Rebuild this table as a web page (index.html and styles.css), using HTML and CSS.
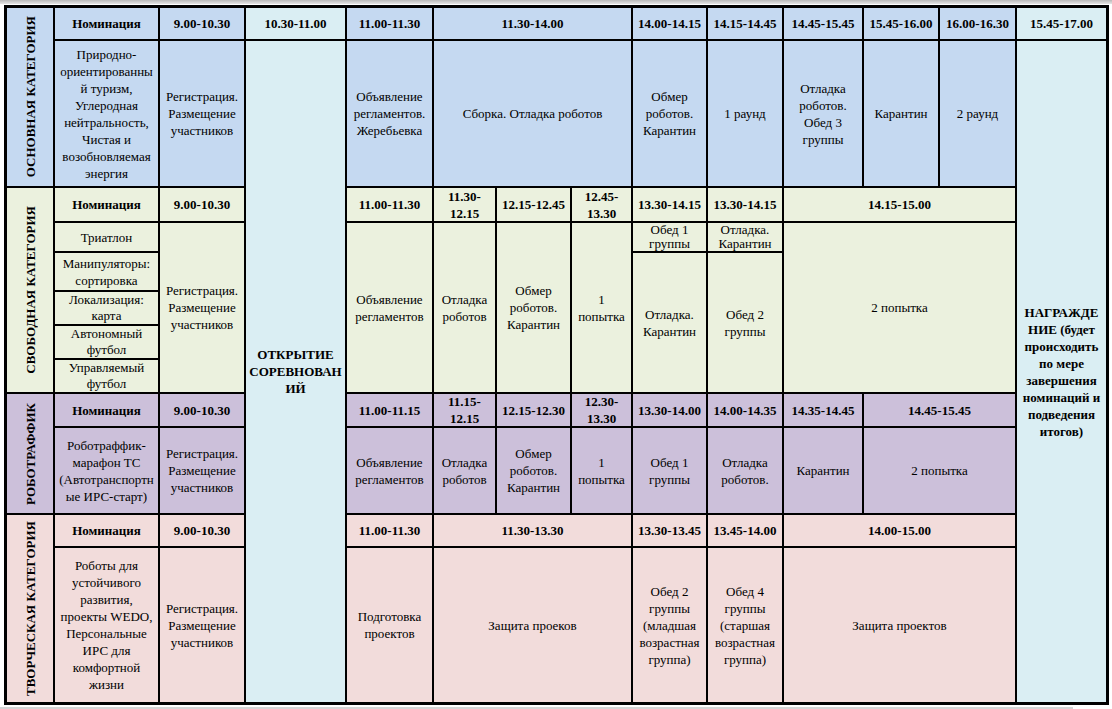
FILE: index.html
```html
<!DOCTYPE html>
<html lang="ru">
<head>
<meta charset="utf-8">
<title>Расписание</title>
<link rel="stylesheet" href="styles.css">
</head>
<body>
<div class="topbar"></div>
<div class="sheet">
  <!-- r0 -->
  <div class="cell cat blue rs2"><span>ОСНОВНАЯ КАТЕГОРИЯ</span></div>
  <div class="cell b blue">Номинация</div>
  <div class="cell b blue">9.00-10.30</div>
  <div class="cell b lblue">10.30-11.00</div>
  <div class="cell b blue">11.00-11.30</div>
  <div class="cell b blue cs3">11.30-14.00</div>
  <div class="cell b blue">14.00-14.15</div>
  <div class="cell b blue">14.15-14.45</div>
  <div class="cell b blue">14.45-15.45</div>
  <div class="cell b blue">15.45-16.00</div>
  <div class="cell b blue">16.00-16.30</div>
  <div class="cell b lblue">15.45-17.00</div>
  <!-- r1 -->
  <div class="cell blue">Природно-<br>ориентированны<br>й туризм,<br>Углеродная<br>нейтральность,<br>Чистая и<br>возобновляемая<br>энергия</div>
  <div class="cell blue">Регистрация.<br>Размещение<br>участников</div>
  <div class="cell b lblue rs11">ОТКРЫТИЕ<br>СОРЕВНОВАН<br>ИЙ</div>
  <div class="cell blue">Объявление<br>регламентов.<br>Жеребьевка</div>
  <div class="cell blue cs3">Сборка. Отладка роботов</div>
  <div class="cell blue">Обмер<br>роботов.<br>Карантин</div>
  <div class="cell blue">1 раунд</div>
  <div class="cell blue">Отладка<br>роботов.<br>Обед 3<br>группы</div>
  <div class="cell blue">Карантин</div>
  <div class="cell blue">2 раунд</div>
  <div class="cell b lblue rs11">НАГРАЖДЕ<br>НИЕ (будет<br>происходить<br>по мере<br>завершения<br>номинаций и<br>подведения<br>итогов)</div>
  <!-- r2 -->
  <div class="cell cat green rs6"><span>СВОБОДНАЯ КАТЕГОРИЯ</span></div>
  <div class="cell b green">Номинация</div>
  <div class="cell b green">9.00-10.30</div>
  <div class="cell b green">11.00-11.30</div>
  <div class="cell b green">11.30-<br>12.15</div>
  <div class="cell b green">12.15-12.45</div>
  <div class="cell b green">12.45-<br>13.30</div>
  <div class="cell b green">13.30-14.15</div>
  <div class="cell b green">13.30-14.15</div>
  <div class="cell b green cs3">14.15-15.00</div>
  <!-- r3 -->
  <div class="cell green">Триатлон</div>
  <div class="cell green rs5">Регистрация.<br>Размещение<br>участников</div>
  <div class="cell green rs5">Объявление<br>регламентов</div>
  <div class="cell green rs5">Отладка<br>роботов</div>
  <div class="cell green rs5">Обмер<br>роботов.<br>Карантин</div>
  <div class="cell green rs5">1<br>попытка</div>
  <div class="cell green tight">Обед 1<br>группы</div>
  <div class="cell green tight">Отладка.<br>Карантин</div>
  <div class="cell green cs3 rs5">2 попытка</div>
  <!-- r4 -->
  <div class="cell green">Манипуляторы:<br>сортировка</div>
  <div class="cell green rs4">Отладка.<br>Карантин</div>
  <div class="cell green rs4">Обед 2<br>группы</div>
  <!-- r5 -->
  <div class="cell green snug">Локализация:<br>карта</div>
  <!-- r6 -->
  <div class="cell green snug">Автономный<br>футбол</div>
  <!-- r7 -->
  <div class="cell green snug">Управляемый<br>футбол</div>
  <!-- r8 -->
  <div class="cell cat purple rs2"><span>РОБОТРАФФИК</span></div>
  <div class="cell b purple">Номинация</div>
  <div class="cell b purple">9.00-10.30</div>
  <div class="cell b purple">11.00-11.15</div>
  <div class="cell b purple">11.15-<br>12.15</div>
  <div class="cell b purple">12.15-12.30</div>
  <div class="cell b purple">12.30-<br>13.30</div>
  <div class="cell b purple">13.30-14.00</div>
  <div class="cell b purple">14.00-14.35</div>
  <div class="cell b purple">14.35-14.45</div>
  <div class="cell b purple cs2">14.45-15.45</div>
  <!-- r9 -->
  <div class="cell purple">Роботраффик-<br>марафон ТС<br>(Автотранспортн<br>ые ИРС-старт)</div>
  <div class="cell purple">Регистрация.<br>Размещение<br>участников</div>
  <div class="cell purple">Объявление<br>регламентов</div>
  <div class="cell purple">Отладка<br>роботов</div>
  <div class="cell purple">Обмер<br>роботов.<br>Карантин</div>
  <div class="cell purple">1<br>попытка</div>
  <div class="cell purple">Обед 1<br>группы</div>
  <div class="cell purple">Отладка<br>роботов.</div>
  <div class="cell purple">Карантин</div>
  <div class="cell purple cs2">2 попытка</div>
  <!-- r10 -->
  <div class="cell cat pink rs2"><span>ТВОРЧЕСКАЯ КАТЕГОРИЯ</span></div>
  <div class="cell b pink">Номинация</div>
  <div class="cell b pink">9.00-10.30</div>
  <div class="cell b pink">11.00-11.30</div>
  <div class="cell b pink cs3">11.30-13.30</div>
  <div class="cell b pink">13.30-13.45</div>
  <div class="cell b pink">13.45-14.00</div>
  <div class="cell b pink cs3">14.00-15.00</div>
  <!-- r11 -->
  <div class="cell pink">Роботы для<br>устойчивого<br>развития,<br>проекты WEDO,<br>Персональные<br>ИРС для<br>комфортной<br>жизни</div>
  <div class="cell pink">Регистрация.<br>Размещение<br>участников</div>
  <div class="cell pink">Подготовка<br>проектов</div>
  <div class="cell pink cs3">Защита проеков</div>
  <div class="cell pink">Обед 2<br>группы<br>(младшая<br>возрастная<br>группа)</div>
  <div class="cell pink">Обед 4<br>группы<br>(старшая<br>возрастная<br>группа)</div>
  <div class="cell pink cs3">Защита проектов</div>
</div>
<div class="bottombar"></div>
</body>
</html>
```
FILE: styles.css
```css
html, body {
  margin: 0;
  padding: 0;
  background: #fff;
}
body {
  width: 1112px;
  height: 709px;
  overflow: hidden;
  font-family: "Liberation Serif", "Times New Roman", serif;
  font-size: 13px;
  line-height: 17px;
  color: #000;
}
.topbar {
  height: 4px;
  background: linear-gradient(#b9b9b9, #e6e6e6);
}
.bottombar {
  height: 2px;
  margin-top: 2px;
  width: 1073px;
  background: #d4d4d4;
}
.sheet {
  margin: 1px 0 0 4px;
  width: max-content;
  display: grid;
  grid-template-columns: 46px 103px 84px 99px 85px 61px 73px 59px 73px 74px 78px 74px 75px 89px;
  grid-template-rows: 31px 145px 33px 28px 37px 32px 32px 32px 32px 85px 31px 154px;
  gap: 2px;
  padding: 3px;
  background: #000;
}
.cell {
  display: flex;
  align-items: center;
  justify-content: center;
  text-align: center;
  overflow: hidden;
  white-space: nowrap;
  padding: 0 1px;
}
.tight { line-height: 14px; }
.snug { line-height: 16px; }
.b { font-weight: bold; }
.cat span {
  writing-mode: vertical-rl;
  transform: rotate(180deg);
  font-weight: bold;
}
.blue { background: #c5d9f1; }
.lblue { background: #daeef3; }
.green { background: #ebf1de; }
.purple { background: #ccc0da; }
.pink { background: #f2dcdb; }
.cs2 { grid-column: span 2; }
.cs3 { grid-column: span 3; }
.rs2 { grid-row: span 2; }
.rs4 { grid-row: span 4; }
.rs5 { grid-row: span 5; }
.rs6 { grid-row: span 6; }
.rs11 { grid-row: span 11; }
```
